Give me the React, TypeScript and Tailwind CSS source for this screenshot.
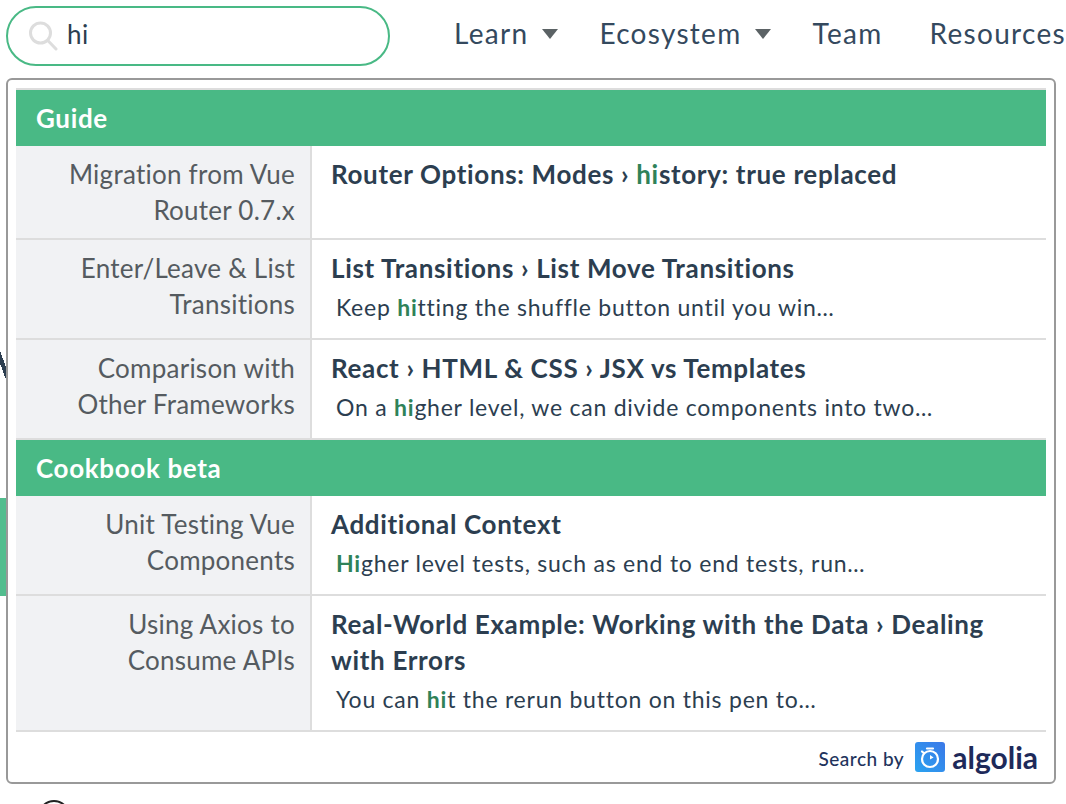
interface Hit {
  section: string[];
  title: string[];
  text?: [string, string, string];
  height: string;
}

const guideHits: Hit[] = [
  {
    section: ['Migration from Vue', 'Router 0.7.x'],
    title: ['Router Options: Modes › ', 'hi', 'story: true replaced'],
    height: 'h-[94px]',
  },
  {
    section: ['Enter/Leave & List', 'Transitions'],
    title: ['List Transitions › List Move Transitions'],
    text: ['Keep ', 'hi', 'tting the shuffle button until you win…'],
    height: 'h-[100px]',
  },
  {
    section: ['Comparison with', 'Other Frameworks'],
    title: ['React › HTML & CSS › JSX vs Templates'],
    text: ['On a ', 'hi', 'gher level, we can divide components into two…'],
    height: 'h-[98px]',
  },
];

const cookbookHits: Hit[] = [
  {
    section: ['Unit Testing Vue', 'Components'],
    title: ['Additional Context'],
    text: ['', 'Hi', 'gher level tests, such as end to end tests, run…'],
    height: 'h-[100px]',
  },
  {
    section: ['Using Axios to', 'Consume APIs'],
    title: ['Real-World Example: Working with the Data › Dealing', 'with Errors'],
    text: ['You can ', 'hi', 't the rerun button on this pen to…'],
    height: 'h-[136px]',
  },
];

const HitRow = ({ hit, last }: { hit: Hit; last?: boolean }) => (
  <div className={`flex ${hit.height} ${last ? '' : 'border-b-2 border-[#ddd]'}`}>
    <div className="w-[296px] shrink-0 border-r-2 border-[#ddd] bg-[#f1f2f4] pr-[15px] pt-[10px] text-right text-[26px] leading-[36px] tracking-[0.25px] text-[#555b60]">
      {hit.section.map((s) => (
        <div key={s} className="whitespace-nowrap">{s}</div>
      ))}
    </div>
    <div className="min-w-0 flex-1 pl-[19px] pt-[10px]">
      {hit.title.length === 3 ? (
        <div className="whitespace-nowrap text-[26px] font-bold leading-[36px] tracking-[0.66px] text-[#2c3e50]">
          {hit.title[0]}
          <span className="text-[#2f8259]">{hit.title[1]}</span>
          {hit.title[2]}
        </div>
      ) : (
        hit.title.map((t) => (
          <div key={t} className="whitespace-nowrap text-[26px] font-bold leading-[36px] tracking-[0.66px] text-[#2c3e50]">{t}</div>
        ))
      )}
      {hit.text && (
        <div className="mt-[3px] whitespace-nowrap pl-[5px] text-[23px] leading-[36px] tracking-[0.76px] text-[#2c3e50]">
          {hit.text[0]}
          <span className="font-bold text-[#2f8259]">{hit.text[1]}</span>
          {hit.text[2]}
        </div>
      )}
    </div>
  </div>
);

const SectionHeader = ({ label }: { label: string }) => (
  <div className="flex h-[58px] items-center border-t-2 border-[#ddd] bg-[#49b985] pl-5 text-[26px] font-bold tracking-[0.65px] text-white">
    {label}
  </div>
);

const AlgoliaMark = () => (
  <svg width="30" height="30" viewBox="0 0 30 30">
    <defs>
      <linearGradient id="alg" x1="0" y1="1" x2="1" y2="0">
        <stop offset="0" stopColor="#2aa3f0" />
        <stop offset="1" stopColor="#3b78e8" />
      </linearGradient>
    </defs>
    <rect width="30" height="30" rx="3" fill="url(#alg)" />
    <circle cx="15" cy="17" r="8" fill="none" stroke="#fff" strokeWidth="2.2" />
    <path d="M12 6.5h6" stroke="#fff" strokeWidth="2.2" strokeLinecap="round" />
    <path d="M7 9.5l2 1.8" stroke="#fff" strokeWidth="2.2" strokeLinecap="round" />
    <path d="M15 13v4.5l3.6-2z" fill="#fff" />
  </svg>
);

const SearchIcon = () => (
  <svg width="30" height="30" viewBox="0 0 30 30" fill="none" stroke="#dddddd" strokeWidth="3">
    <circle cx="11.5" cy="12" r="10" />
    <path d="M18.8 19.5L27 28" strokeLinecap="round" />
  </svg>
);

const Caret = () => <span className="mt-[3px] h-0 w-0 border-x-[8px] border-t-[10px] border-x-transparent border-t-[#5b6265]" />;

export default function App() {
  return (
    <div className="relative h-[804px] w-[1066px] overflow-hidden bg-white font-['Lato','Liberation_Sans',sans-serif]">
      <div className="flex items-center pl-[6px] pt-[6px]">
        <div className="flex h-[60px] w-[384px] shrink-0 items-center rounded-[30px] border-2 border-[#49b985] pl-[21px]">
          <SearchIcon />
          <span className="ml-[8px] pb-1 text-[26px] tracking-[0.6px] text-[#2c3e50]">hi</span>
        </div>
        <nav className="ml-[64px] flex shrink-0 items-center whitespace-nowrap pb-[7px] text-[28px] tracking-[1.3px] text-[#34495e]">
          <span>Learn</span>
          <span className="ml-[14px] flex"><Caret /></span>
          <span className="ml-[41px]">Ecosystem</span>
          <span className="ml-[13px] flex"><Caret /></span>
          <span className="ml-[42px]">Team</span>
          <span className="ml-[47px]">Resources</span>
        </nav>
      </div>

      {/* bits of the page showing around the dropdown */}
      <div className="absolute left-0 top-[498px] h-[98px] w-[6px] bg-[#52bd8e]" />
      <div className="absolute left-0 top-[352px] h-[34px] w-[6px] bg-[linear-gradient(70deg,transparent_45%,#2c3e50_45%,#2c3e50_70%,transparent_70%)]" />
      <div className="absolute left-[38px] top-[800px] h-8 w-8 rounded-full border-2 border-[#222]" />

      <div className="absolute left-[6px] top-[78px] h-[706px] w-[1050px] rounded-[6px] border-2 border-[#999] bg-white pl-2 pr-2 pt-2">
        <SectionHeader label="Guide" />
        {guideHits.map((hit, i) => (
          <HitRow key={i} hit={hit} last={i === guideHits.length - 1} />
        ))}
        <SectionHeader label="Cookbook beta" />
        {cookbookHits.map((hit) => (
          <HitRow key={hit.title[0]} hit={hit} />
        ))}
        <div className="flex h-[50px] items-center justify-end pr-2">
          <span className="pt-[5px] text-[19px] font-medium tracking-[0.5px] text-[#22335c]">Search by</span>
          <span className="ml-[11px] flex"><AlgoliaMark /></span>
          <span className="ml-[7px] text-[30px] font-bold leading-none text-[#1e2a5a]">algolia</span>
        </div>
      </div>
    </div>
  );
}
